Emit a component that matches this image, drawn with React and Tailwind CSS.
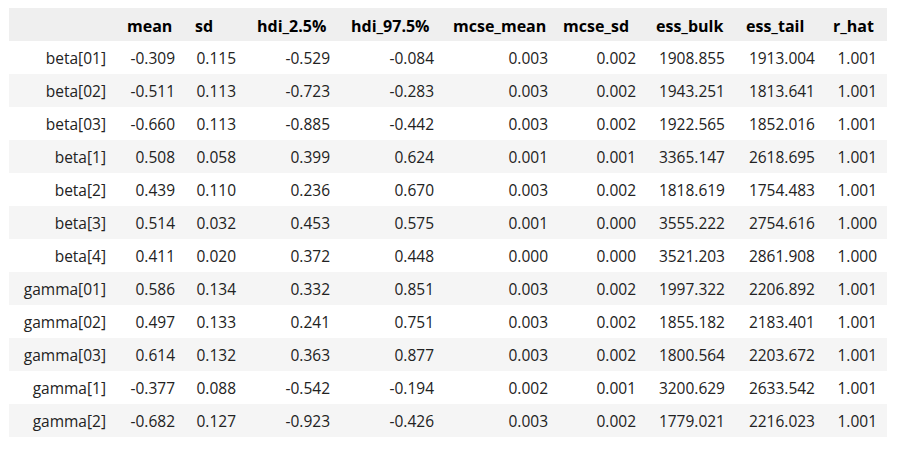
import React from 'react';

const cols = [
    { key: 'mean', pl: 'pl-[11px]' },
    { key: 'sd', pl: 'pl-[10px]' },
    { key: 'hdi_2.5%', pl: 'pl-[11px]' },
    { key: 'hdi_97.5%', pl: 'pl-[11px]' },
    { key: 'mcse_mean', pl: 'pl-[9px]' },
    { key: 'mcse_sd', pl: 'pl-[5px]' },
    { key: 'ess_bulk', pl: 'pl-[10px]' },
    { key: 'ess_tail', pl: 'pl-[11px]' },
    { key: 'r_hat', pl: 'pl-[8px]' },
];

const rows = [
    ['beta[01]', '-0.309', '0.115', '-0.529', '-0.084', '0.003', '0.002', '1908.855', '1913.004', '1.001'],
    ['beta[02]', '-0.511', '0.113', '-0.723', '-0.283', '0.003', '0.002', '1943.251', '1813.641', '1.001'],
    ['beta[03]', '-0.660', '0.113', '-0.885', '-0.442', '0.003', '0.002', '1922.565', '1852.016', '1.001'],
    ['beta[1]', '0.508', '0.058', '0.399', '0.624', '0.001', '0.001', '3365.147', '2618.695', '1.001'],
    ['beta[2]', '0.439', '0.110', '0.236', '0.670', '0.003', '0.002', '1818.619', '1754.483', '1.001'],
    ['beta[3]', '0.514', '0.032', '0.453', '0.575', '0.001', '0.000', '3555.222', '2754.616', '1.000'],
    ['beta[4]', '0.411', '0.020', '0.372', '0.448', '0.000', '0.000', '3521.203', '2861.908', '1.000'],
    ['gamma[01]', '0.586', '0.134', '0.332', '0.851', '0.003', '0.002', '1997.322', '2206.892', '1.001'],
    ['gamma[02]', '0.497', '0.133', '0.241', '0.751', '0.003', '0.002', '1855.182', '2183.401', '1.001'],
    ['gamma[03]', '0.614', '0.132', '0.363', '0.877', '0.003', '0.002', '1800.564', '2203.672', '1.001'],
    ['gamma[1]', '-0.377', '0.088', '-0.542', '-0.194', '0.002', '0.001', '3200.629', '2633.542', '1.001'],
    ['gamma[2]', '-0.682', '0.127', '-0.923', '-0.426', '0.003', '0.002', '1779.021', '2216.023', '1.001'],
];

// same column template for header and body rows
const grid = 'grid grid-cols-[107px_69px_61px_94px_104px_114px_88px_89px_90px_62px]';

function App() {
    return (
        <div className="bg-white w-[897px] h-[449px] pt-2 pl-[9px] font-['Open_Sans',sans-serif] text-[15.5px]">
            <div className="w-[878px]">
                <div className={`${grid} h-[33px] pt-[3px] items-center bg-[#efefef] text-black font-bold text-[16px]`}>
                    <div />
                    {cols.map((c) => (
                        <div key={c.key} className={`${c.pl} whitespace-nowrap`}>{c.key}</div>
                    ))}
                </div>
                {rows.map((row, idx) => (
                    <div
                        key={row[0]}
                        className={`${grid} h-[33px] pt-[2px] items-center text-[#222] ${idx % 2 === 1 ? 'bg-[#f5f5f5]' : 'bg-white'}`}
                    >
                        {row.map((cell, i) => (
                            <div key={i} className="text-right pr-[10px] whitespace-nowrap">{cell}</div>
                        ))}
                    </div>
                ))}
            </div>
        </div>
    );
}

export default App;
